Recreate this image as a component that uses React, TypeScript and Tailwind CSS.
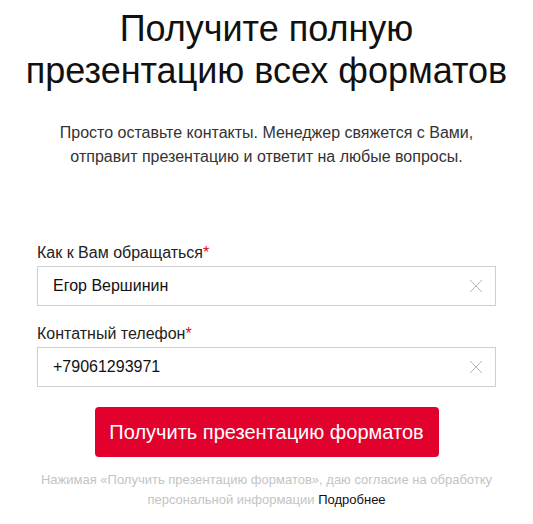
import React from "react";

function ClearIcon() {
  return (
    <svg width="14" height="14" viewBox="0 0 14 14" fill="none" aria-hidden>
      <path d="M1 1L13 13M13 1L1 13" stroke="#b8b8b8" strokeWidth="1" />
    </svg>
  );
}

function Field({ label, value }: { label: string; value: string }) {
  return (
    <div className="flex flex-col">
      <label className="text-[16px] leading-[20px] text-[#222]">
        {label}
        <span className="text-[#e2012d]">*</span>
      </label>
      <div className="mt-[3px] flex h-[40px] items-center border border-[#cfcfcf] bg-white pl-[15px] pr-[12px]">
        <span className="flex-1 text-[16px] text-[#111]">{value}</span>
        <ClearIcon />
      </div>
    </div>
  );
}

export default function App() {
  return (
    <div className="w-[533px] h-[524px] bg-white font-['Liberation_Sans',Arial,sans-serif] text-[#111]">
      <h1 className="pt-[8px] text-center text-[36px] leading-[42px] text-[#111]">
        Получите полную
        <br />
        презентацию всех форматов
      </h1>
      <p className="mt-[29px] text-center text-[16px] leading-[24px] text-[#333]">
        Просто оставьте контакты. Менеджер свяжется с Вами,
        <br />
        отправит презентацию и ответит на любые вопросы.
      </p>
      <div className="mt-[74px] flex flex-col gap-[18px] px-[37px]">
        <Field label="Как к Вам обращаться" value="Егор Вершинин" />
        <Field label="Контатный телефон" value="+79061293971" />
      </div>
      <div className="mt-[20px] flex justify-center">
        <button className="h-[50px] w-[344px] rounded-[4px] bg-[#e2012d] text-[20px] text-white">
          Получить презентацию форматов
        </button>
      </div>
      <p className="mt-[13px] text-center text-[13px] leading-[20px] text-[#c4c4c4]">
        Нажимая «Получить презентацию форматов», даю согласие на обработку
        <br />
        персональной информации <span className="text-[#111]">Подробнее</span>
      </p>
    </div>
  );
}
